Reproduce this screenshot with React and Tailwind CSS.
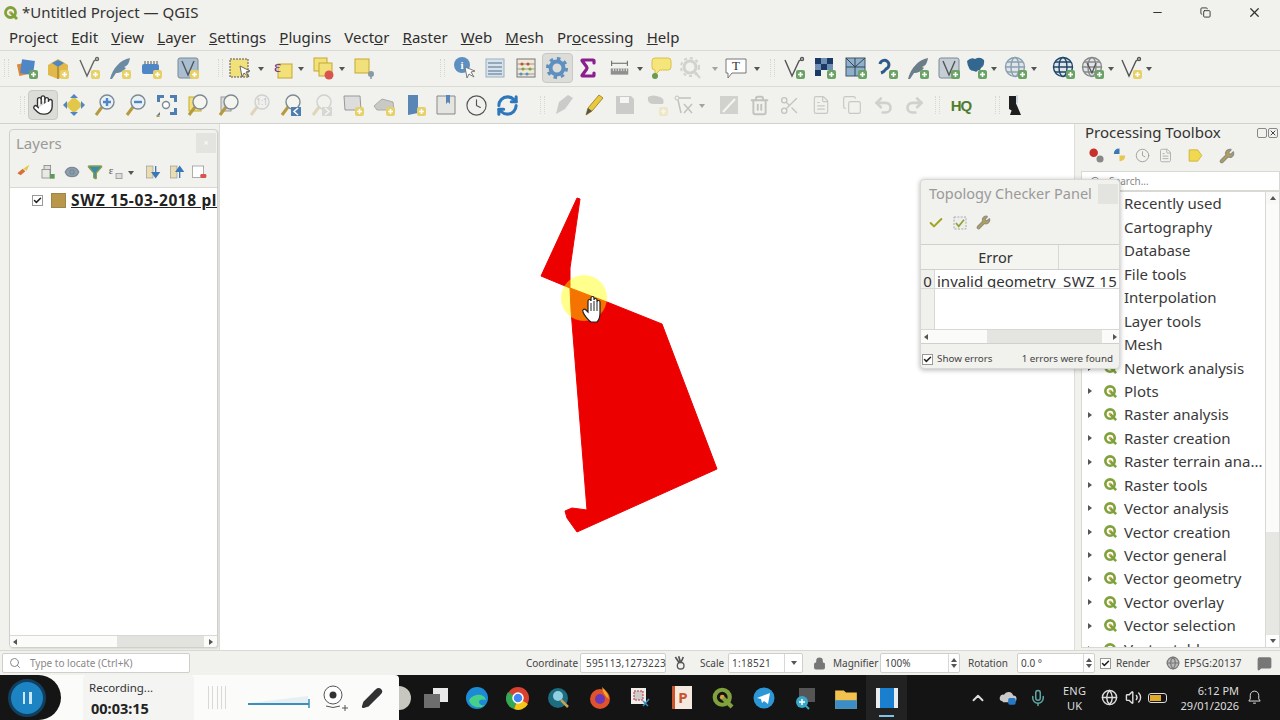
import {
  Hand, Sigma, Search, Clock, Wrench, Scissors, Undo2, Redo2, ChevronUp, Mic, Volume2, Globe, Lock, Eye, Funnel, Check, FileText,
  RefreshCw, Pencil, Minus, X, Copy, Trash2, MessageSquare,
} from "lucide-react";

const sans = "font-['Noto_Sans',sans-serif]";

function S({ children, size = 24, className = "" }) {
  return (
    <svg width={size} height={size} viewBox="0 0 24 24" className={`shrink-0 ${className}`}>
      {children}
    </svg>
  );
}

// small plus badge in the corner of the "add layer" icons
function Add({ green }) {
  return (
    <g>
      <rect x="14" y="14" width="9" height="9" rx="2" fill={green ? "#6ba366" : "#e8d068"} />
      <path d="M18.5 16v5M16 18.5h5" stroke="#fff" strokeWidth="1.6" />
    </g>
  );
}

function Mag({ fill = "#fff", x = 14, y = 9, r = 7 }) {
  return (
    <g>
      <path d={`M${x - 5} ${y + 5}L3 22`} stroke="#b59a3e" strokeWidth="3" />
      <circle cx={x} cy={y} r={r} fill={fill} stroke="#7d8a94" strokeWidth="1.4" />
    </g>
  );
}

function Vert({ c = "#666" }) {
  return (
    <g fill="none" stroke={c} strokeWidth="1.4">
      <path d="M3 4l7 16 7-15 3-2" />
      <circle cx="20" cy="3" r="1.5" fill="#fff" />
    </g>
  );
}

function Feather({ c = "#6b8aa3" }) {
  return <path d="M2 23C5 12 12 4 22 2c-1 6-3 8-6 9l2 1c-3 4-7 5-10 5l-4 6z" fill={c} />;
}

function Glob({ c = "#8aa0b0" }) {
  return (
    <g fill="none" stroke={c} strokeWidth="1.4">
      <circle cx="11" cy="11" r="9.5" fill="#dfe5e8" />
      <ellipse cx="11" cy="11" rx="4" ry="9.5" />
      <path d="M1.5 11h19M3 6h16M3 16h16" />
    </g>
  );
}

function Grip({ className = "" }) {
  return <div className={`w-[5px] h-[18px] shrink-0 border-x border-dotted border-[#d6d6d2] ${className}`} />;
}

function Drop() {
  return <div className="w-0 h-0 shrink-0 border-x-[3.5px] border-x-transparent border-t-[4px] border-t-[#555] ml-[3px] mt-[2px]" />;
}

function Btn({ children, active, className = "w-[31px]" }) {
  return (
    <div className={`h-[30px] flex items-center justify-center shrink-0 rounded-sm ${active ? "bg-[#dcdcd8] border border-[#c8c8c4]" : ""} ${className}`}>
      {children}
    </div>
  );
}

function QLogo({ size = 16 }) {
  return (
    <svg width={size} height={size} viewBox="0 0 16 16" className="shrink-0">
      <circle cx="7.5" cy="7.5" r="5" fill="none" stroke="#7fa23c" strokeWidth="2.8" />
      <circle cx="7.5" cy="7.5" r="1.6" fill="#d9a441" />
      <path d="M8 8l6 6" stroke="#7fa23c" strokeWidth="2.8" />
    </svg>
  );
}

function Arrow({ dir = "right", className = "" }) {
  if (dir === "right") return <div className={`w-0 h-0 shrink-0 border-y-[3.5px] border-y-transparent border-l-[4px] border-l-[#555] ${className}`} />;
  if (dir === "left") return <div className={`w-0 h-0 shrink-0 border-y-[3.5px] border-y-transparent border-r-[4px] border-r-[#555] ${className}`} />;
  if (dir === "up") return <div className={`w-0 h-0 shrink-0 border-x-[3.5px] border-x-transparent border-b-[4px] border-b-[#555] ${className}`} />;
  return <div className={`w-0 h-0 shrink-0 border-x-[3.5px] border-x-transparent border-t-[4px] border-t-[#555] ${className}`} />;
}

function Menu() {
  return (
    <div className={`flex items-center h-[25px] pl-[9px] gap-[13.2px] text-[15px] text-[#2e2e2e] ${sans}`}>
      <span>Project</span>
      <span><u>E</u>dit</span>
      <span><u>V</u>iew</span>
      <span><u>L</u>ayer</span>
      <span><u>S</u>ettings</span>
      <span><u>P</u>lugins</span>
      <span>Vect<u>o</u>r</span>
      <span><u>R</u>aster</span>
      <span><u>W</u>eb</span>
      <span><u>M</u>esh</span>
      <span>Pr<u>o</u>cessing</span>
      <span><u>H</u>elp</span>
    </div>
  );
}

function ToolbarOne() {
  return (
    <div className="flex items-center h-[36px] pl-[4px] pb-px border-t border-[#dadad6]">
      <Grip className="mr-[2px]" />
      <Btn><S><rect x="3" y="7" width="12" height="12" fill="#d98a3a" transform="rotate(-12 9 13)" /><rect x="6" y="4" width="13" height="14" fill="#4f86c6" transform="rotate(8 12 11)" /><Add green /></S></Btn>
      <Btn><S><path d="M2 9l10-6 10 6v10l-10 4-10-4z" fill="#e2b84a" /><path d="M6 7l6-3 6 3-6 4z" fill="#4f86c6" /><path d="M12 11v12" stroke="#8a6d2a" /><Add /></S></Btn>
      <Btn><S><Vert /><Add /></S></Btn>
      <Btn><S><Feather /><Add /></S></Btn>
      <Btn><S><rect x="3" y="8" width="17" height="10" rx="2" fill="#4f86c6" /><path d="M6 5v3M9 5v3M12 5v3M15 5v3M18 5v3" stroke="#555" /><Add /></S></Btn>
      <div className="w-[6px] shrink-0" />
      <Btn><S><rect x="2" y="2" width="20" height="20" rx="2" fill="#a9bed0" stroke="#7d8a94" /><path d="M6 5l6 14 6-14" fill="none" stroke="#555" strokeWidth="1.4" /><Add /></S></Btn>
      <div className="w-[15px] shrink-0" />
      <Grip />
      <div className="w-[4.5px] shrink-0" />
      <Btn className="w-[24px]"><S><rect x="2" y="3" width="18" height="18" fill="#f2e07a" stroke="#555" strokeDasharray="2 1" /><path d="M12 10l2 11 2-4 5 4-3-5 4-1z" fill="#fff" stroke="#666" /></S></Btn>
      <div className="w-[3px] shrink-0" />
      <Drop />
      <div className="w-[7.5px] shrink-0" />
      <Btn className="w-[24px]"><S><rect x="7" y="8" width="14" height="14" fill="#f2e07a" stroke="#c4a92f" /><text x="3" y="16" fontSize="17" fill="#6a2a8a" fontFamily="Liberation Serif, serif">ε</text></S></Btn>
      <Drop />
      <div className="w-[8px] shrink-0" />
      <Btn className="w-[24px]"><S><rect x="2" y="2" width="13" height="13" fill="#f2e07a" stroke="#c4a92f" /><rect x="7" y="7" width="13" height="13" fill="#f2e07a" stroke="#c4a92f" /><circle cx="17" cy="19" r="4.5" fill="#d9534f" /></S></Btn>
      <Drop />
      <div className="w-[3.5px] shrink-0" />
      <Btn className="w-[31px]"><S><rect x="3" y="3" width="14" height="14" fill="#f2e07a" stroke="#c4a92f" /><circle cx="19" cy="18" r="3" fill="#8a9aa5" /><path d="M19 20v3" stroke="#8a9aa5" strokeWidth="1.5" /></S></Btn>
      <div className="w-[69px] shrink-0 flex justify-end"><Grip className="mr-[4px]" /></div>
      <Btn><S><circle cx="10" cy="9" r="8" fill="#5d8fc0" /><text x="10" y="13" textAnchor="middle" fontSize="11" fontWeight="700" fill="#fff" fontFamily="Liberation Serif, serif">i</text><path d="M13 11l2 11 2-4 5 3-3-5 4-1z" fill="#fff" stroke="#777" /></S></Btn>
      <Btn><S><rect x="3" y="3" width="18" height="18" fill="#d6e2ec" stroke="#9fb0bd" /><path d="M5 7h14M5 11h14M5 15h14M5 18h14" stroke="#7d97ab" strokeWidth="1.4" /></S></Btn>
      <Btn><S><rect x="3" y="3" width="18" height="18" fill="#efe9d8" stroke="#777" /><path d="M3 8h18M3 13h18M3 18h18" stroke="#999" /><circle cx="8" cy="8" r="1.6" fill="#c0513c" /><circle cx="14" cy="8" r="1.6" fill="#c0513c" /><circle cx="9" cy="13" r="1.6" fill="#7fa23c" /><circle cx="16" cy="13" r="1.6" fill="#7fa23c" /><circle cx="7" cy="18" r="1.6" fill="#5d8fc0" /><circle cx="13" cy="18" r="1.6" fill="#5d8fc0" /></S></Btn>
      <Btn active><S><circle cx="12" cy="12" r="6.5" fill="none" stroke="#5d8fc0" strokeWidth="4" /><circle cx="12" cy="12" r="9.5" fill="none" stroke="#5d8fc0" strokeWidth="3" strokeDasharray="3.5 3.9" /></S></Btn>
      <Btn><Sigma size={24} strokeWidth={3.2} color="#8a1f8f" /></Btn>
      <Btn className="w-[22px] ml-[5px]"><S size={21}><path d="M3 6h18M3 3v6M21 3v6" stroke="#666" strokeWidth="1.2" /><rect x="2" y="12" width="20" height="7" fill="#8f8f8f" /><path d="M5 12v3M8 12v3M11 12v3M14 12v3M17 12v3M20 12v3" stroke="#eee" /></S></Btn>
      <div className="w-[3px] shrink-0" />
      <Drop />
      <div className="w-[3px] shrink-0" />
      <Btn><S><path d="M3 5q0-3 3-3h13q3 0 3 3v6q0 3-3 3H11l-5 5v-5q-3 0-3-3z" fill="#f6e57a" stroke="#d8c24c" /><circle cx="6" cy="20" r="3" fill="#6b9a50" /></S></Btn>
      <Btn className="w-[22px] ml-[3px]"><S className="opacity-30"><circle cx="11" cy="11" r="6" fill="none" stroke="#888" strokeWidth="3" /><circle cx="11" cy="11" r="9" fill="none" stroke="#888" strokeWidth="2" strokeDasharray="3 3" /><path d="M15 15l6 7" stroke="#888" strokeWidth="2" /></S></Btn>
      <Arrow dir="down" className="ml-[10px] mt-[2px] opacity-50" />
      <div className="w-[6.5px] shrink-0" />
      <Btn className="w-[24px]"><S><path d="M2 3h20v14H8l-4 5v-5H2z" fill="#fff" stroke="#777" /><text x="12" y="14" textAnchor="middle" fontSize="13" fill="#333" fontFamily="Liberation Serif, serif">T</text></S></Btn>
      <div className="w-[2.5px] shrink-0" />
      <Drop />
      <div className="w-[18.5px] shrink-0 flex justify-end"><Grip className="mr-[3px]" /></div>
      <Btn><S><Vert c="#555" /><Add green /></S></Btn>
      <Btn><S><rect x="2" y="2" width="6" height="6" fill="#1c3a66" /><rect x="14" y="2" width="6" height="6" fill="#1c3a66" /><rect x="8" y="8" width="6" height="6" fill="#1c3a66" /><rect x="2" y="14" width="6" height="6" fill="#1c3a66" /><rect x="8" y="2" width="6" height="6" fill="#6f8fb5" /><rect x="14" y="8" width="6" height="6" fill="#6f8fb5" /><rect x="2" y="8" width="6" height="6" fill="#6f8fb5" /><Add green /></S></Btn>
      <Btn><S><rect x="2" y="2" width="19" height="18" fill="#8eb0cb" stroke="#456" /><path d="M2 11h19M11 2v18M2 2l9 9M21 2l-10 9" stroke="#345" /><Add green /></S></Btn>
      <Btn><S><path d="M5 8a4.500 4.500 0 1 1 6 5q-2 3-5 4" fill="none" stroke="#2d5a88" strokeWidth="3" /><Add green /></S></Btn>
      <Btn><S><Feather c="#6c7d8a" /><Add green /></S></Btn>
      <Btn><S><rect x="2" y="2" width="20" height="20" rx="2" fill="#c5ced4" stroke="#7d8a94" /><path d="M6 5l6 14 6-14" fill="none" stroke="#555" strokeWidth="1.4" /><Add green /></S></Btn>
      <Btn className="w-[24px]"><S><path d="M3 5q4-4 8-2 5-3 9 1 1 5-3 8-1 3-3 2-1 3-4 1-6 0-7-10z" fill="#34678f" /><Add green /></S></Btn>
      <Drop />
      <div className="w-[7px] shrink-0" />
      <Btn className="w-[24px]"><S><Glob /><Add green /></S></Btn>
      <Drop />
      <div className="w-[11px] shrink-0" />
      <Btn className="w-[31px]"><S><Glob c="#1e4668" /><Add green /></S></Btn>
      <Btn className="w-[24px] ml-[2px]"><S><Glob c="#888" /><path d="M6 7l5 10 4-10" fill="none" stroke="#555" strokeWidth="1.3" /><Add green /></S></Btn>
      <Drop />
      <div className="w-[5px] shrink-0" />
      <Btn className="w-[24px]"><S><Vert c="#555" /><Add /></S></Btn>
      <Drop />
    </div>
  );
}

const off = "opacity-30";

function ToolbarTwo() {
  return (
    <div className="flex items-center h-[37px] pl-[20px] border-t border-[#dadad6]">
      <Grip className="mr-[3px]" />
      <Btn active className="w-[30px]"><Hand size={22} strokeWidth={1.5} color="#333" fill="#fff" /></Btn>
      <Btn><S><rect x="6" y="6" width="12" height="12" fill="#e2c84a" transform="rotate(45 12 12)" /><path d="M12 1l4 4H8zM12 23l4-4H8zM1 12l4-4v8zM23 12l-4-4v8z" fill="#4f86c6" /></S></Btn>
      <Btn><S><Mag fill="#e9f0f6" /><path d="M10 9h8M14 5v8" stroke="#4f86c6" strokeWidth="2.4" /></S></Btn>
      <Btn><S><Mag fill="#e9f0f6" /><path d="M10 9h8" stroke="#4f86c6" strokeWidth="2.4" /></S></Btn>
      <Btn><S><path d="M2 2h7v3H5v4H2zM22 2h-7v3h4v4h3zM2 22h3v-3zM22 22h-7v-3h4v-4h3z" fill="#4f7fb0" /><Mag fill="#fff" x="11" y="12" r="3.500" /></S></Btn>
      <Btn><S><rect x="3" y="4" width="12" height="14" fill="#f2e07a" stroke="#c4a92f" /><Mag fill="#f5f5f0" /></S></Btn>
      <Btn><S><rect x="4" y="4" width="10" height="14" fill="#ddd" stroke="#999" /><Mag fill="#f5f5f0" /></S></Btn>
      <Btn><S className={off}><Mag fill="#eee" /><text x="14" y="12" textAnchor="middle" fontSize="8" fill="#555">1:1</text></S></Btn>
      <Btn><S><Mag fill="#f5f5f0" /><rect x="12" y="14" width="10" height="9" fill="#4f7fb0" /><path d="M19 15l-4 3.500 4 3.500" fill="none" stroke="#fff" strokeWidth="1.5" /></S></Btn>
      <Btn><S className={off}><Mag fill="#f5f5f0" /><rect x="12" y="14" width="10" height="9" fill="#999" /><path d="M15 15l4 3.500-4 3.500" fill="none" stroke="#fff" strokeWidth="1.5" /></S></Btn>
      <Btn><S><path d="M3 3h16l1 14H4z" fill="#ddd" stroke="#999" /><Add /></S></Btn>
      <Btn><S><path d="M2 13l8-7 11 3 1 8H5z" fill="#c9c9c5" stroke="#aaa" /><Add /></S></Btn>
      <Btn><S><path d="M5 2h10v18l-10 2z" fill="#5a86b5" /><Add /></S></Btn>
      <Btn><S><path d="M3 3h18v18H3z" fill="#e4e4e0" stroke="#888" /><path d="M12 2h4v9l-2-2-2 2z" fill="#5a86b5" /></S></Btn>
      <Btn><Clock size={23} strokeWidth={1.2} color="#555" /></Btn>
      <Btn><RefreshCw size={23} strokeWidth={3.2} color="#2f77bb" /></Btn>
      <div className="w-[26px] shrink-0 flex justify-end"><Grip className="mr-[4px]" /></div>
      <Btn><S className={off}><path d="M3 21L6 9l9-7 5 3-8 11z" fill="#777" /></S></Btn>
      <Btn className="w-[28px]"><S><path d="M4 22l2-7L17 2l4 3L10 18z" fill="#e9c93f" stroke="#a88d2a" /><path d="M4 22l2-7 4 3z" fill="#555" /></S></Btn>
      <Btn className="w-[33px]"><S className={off}><path d="M3 3h15l3 3v15H3z" fill="#777" /><rect x="7" y="4" width="9" height="6" fill="#fff" /></S></Btn>
      <Btn><S className={off}><path d="M3 4q5-3 12 0 5 2 3 7H8q-6 0-5-7z" fill="#777" /><Add /></S></Btn>
      <Btn className="w-[24px]"><S className={off}><circle cx="5" cy="5" r="2" fill="none" stroke="#555" /><path d="M6 7l3 13M7 5h12M12 11l8 9M20 11l-8 9" stroke="#555" strokeWidth="1.5" /></S></Btn>
      <Arrow dir="down" className="ml-[3px] mt-[2px] opacity-50" />
      <div className="w-[7px] shrink-0" />
      <Btn className="w-[33px]"><S className={off}><rect x="3" y="3" width="18" height="18" fill="#888" /><path d="M6 19L18 6" stroke="#fff" strokeWidth="2" /></S></Btn>
      <Btn className="w-[29px]"><Trash2 size={21} strokeWidth={2.2} color="#c2c2be" /></Btn>
      <Btn><Scissors size={21} strokeWidth={1.5} color="#c2c2be" /></Btn>
      <Btn><FileText size={20} strokeWidth={1.4} color="#c8c8c4" /></Btn>
      <Btn className="w-[31px]"><Copy size={20} strokeWidth={1.4} color="#c8c8c4" /></Btn>
      <Btn className="w-[32px]"><Undo2 size={21} strokeWidth={3} color="#d0d0cc" /></Btn>
      <Btn className="w-[30px]"><Redo2 size={21} strokeWidth={3} color="#d0d0cc" /></Btn>
      <div className="w-[16px] shrink-0 flex justify-center"><Grip /></div>
      <div className="w-[32px] shrink-0 flex items-center justify-center text-[15px] font-bold text-[#4e7d2f] font-['Liberation_Sans',sans-serif] leading-none tracking-[-1px]">HQ</div>
      <div className="w-[23px] shrink-0 flex justify-end"><Grip /></div>
      <Btn className="w-[28px]"><S><path d="M7 3h7v17l-7-4z" fill="#1e1e1e" /><path d="M13 8l6 14H8z" fill="#1e1e1e" /><path d="M15 2v8" stroke="#9cc4e4" /></S></Btn>
    </div>
  );
}

function HScroll({ thumbClass, className = "" }) {
  return (
    <div className={`flex items-center bg-[#fbfbfa] border-t border-[#d8d8d4] ${className}`}>
      <div className="w-[9px] flex justify-center"><Arrow dir="left" /></div>
      <div className={thumbClass} />
      <div className="flex-1" />
      <div className="w-[9px] flex justify-center"><Arrow dir="right" /></div>
    </div>
  );
}

function LayersPanel() {
  return (
    <div className="w-[209px] ml-[9px] mt-[5px] mb-[2px] mr-px flex flex-col border border-[#cfcfcb] rounded-sm shadow-[1px_1px_2px_rgba(0,0,0,0.1)] bg-[#f1f1ed] overflow-hidden">
      <div className="h-[26px] pl-[6px] pr-px flex items-center justify-between shrink-0">
        <span className={`text-[15px] text-[#9a9a9a] ${sans}`}>Layers</span>
        <div className="w-[20px] h-[20px] bg-[#e3e3df] flex items-center justify-center text-[9px] text-[#fff]">×</div>
      </div>
      <div className="h-[31px] pl-[2px] flex items-center shrink-0">
        <Btn className="w-[24px]"><S size={16}><path d="M2 14l8-7 4 4-7 6z" fill="#d9703a" /><path d="M11 7l9-6-4 9z" fill="#e2c84a" /></S></Btn>
        <Btn className="w-[24px]"><S size={16}><rect x="6" y="2" width="10" height="14" fill="#ddd" stroke="#777" /><rect x="3" y="8" width="12" height="13" fill="#e9e9e5" stroke="#777" /><rect x="15" y="15" width="7" height="7" fill="#5f9a5a" /></S></Btn>
        <Btn className="w-[24px]"><Eye size={16} fill="#8aa0b0" color="#7d8a94" /></Btn>
        <Btn className="w-[22px]"><Funnel size={16} fill="#3d8aa8" color="#8aa04a" /></Btn>
        <Btn className="w-[19px]"><S size={16}><text x="1" y="15" fontSize="17" fill="#555" fontFamily="Liberation Serif, serif">ε</text><rect x="12" y="14" width="9" height="8" fill="#ddd" stroke="#888" /></S></Btn>
        <Drop />
        <div className="w-[7px] shrink-0" />
        <Btn className="w-[24px]"><S size={16}><rect x="2" y="3" width="10" height="18" fill="#e9dcb0" stroke="#999" /><path d="M16 3v12M11 13l5 7 5-7z" fill="#3b78b5" stroke="#3b78b5" strokeWidth="2" /></S></Btn>
        <Btn className="w-[23px]"><S size={16}><rect x="2" y="3" width="10" height="18" fill="#e9dcb0" stroke="#999" /><path d="M16 21V9M11 11l5-7 5 7z" fill="#3b78b5" stroke="#3b78b5" strokeWidth="2" /></S></Btn>
        <Btn className="w-[22px]"><S size={16}><rect x="2" y="3" width="17" height="17" fill="#fff" stroke="#888" /><rect x="14" y="15" width="9" height="6" rx="2" fill="#d9534f" /></S></Btn>
      </div>
      <div className="flex-1 bg-white border-t border-[#d8d8d4] overflow-hidden">
        <div className="h-[25px] flex items-center whitespace-nowrap">
          <div className="ml-[22px] w-[11px] h-[11px] border border-[#999] bg-white flex items-center justify-center shrink-0">
            <Check size={9} strokeWidth={4} color="#222" />
          </div>
          <div className="ml-[8px] w-[15px] h-[15px] bg-[#b8974a] border border-[#9c8650] shrink-0" />
          <span className={`ml-[5px] text-[15.5px] font-bold underline tracking-[0.6px] text-[#222] ${sans}`}>SWZ 15-03-2018 pl</span>
        </div>
      </div>
      <HScroll className="h-[12px] pr-[2px] shrink-0" thumbClass="w-[87px] ml-[98px] h-full bg-[#e2e2de]" />
    </div>
  );
}

const toolboxItems = [
  "Recently used", "Cartography", "Database", "File tools", "Interpolation", "Layer tools", "Mesh", "Network analysis", "Plots",
  "Raster analysis", "Raster creation", "Raster terrain ana...", "Raster tools", "Vector analysis", "Vector creation",
  "Vector general", "Vector geometry", "Vector overlay", "Vector selection", "Vector table",
];

function Toolbox() {
  return (
    <div className={`w-[200px] ml-[5px] mb-[2px] flex flex-col ${sans}`}>
      <div className="h-[17px] pl-[5px] pr-[2px] flex items-center justify-between shrink-0">
        <span className="text-[15px] text-[#333]">Processing Toolbox</span>
        <div className="flex gap-[1px]">
          <div className="w-[10px] h-[10px] border border-[#888] rounded-[2px]" />
          <div className="w-[10px] h-[10px] border border-[#888] rounded-[2px] flex items-center justify-center"><X size={8} color="#444" strokeWidth={3} /></div>
        </div>
      </div>
      <div className="h-[29px] mb-px pl-[5px] flex items-center shrink-0">
        <Btn className="w-[23px]"><S size={17}><circle cx="8" cy="8" r="6" fill="#c9302c" /><circle cx="17" cy="17" r="5" fill="#888" /></S></Btn>
        <Btn className="w-[23px]"><S size={17}><path d="M4 10q0-8 8-8v8z" fill="#3b78b5" /><path d="M20 12q0 8-8 8v-8z" fill="#e6c84f" /></S></Btn>
        <Btn className="w-[23px]"><Clock size={15} strokeWidth={1.4} color="#999" /></Btn>
        <Btn className="w-[23px]"><FileText size={15} strokeWidth={1.4} color="#aaa" /></Btn>
        <div className="w-[6px]" />
        <Btn className="w-[24px]"><S size={17}><path d="M3 4h12l6 8-6 8H3z" fill="#f0d84f" stroke="#c4a92f" /></S></Btn>
        <div className="w-[8px]" />
        <Btn className="w-[24px]"><Wrench size={16} fill="#b9a04a" color="#8f8f8a" /></Btn>
      </div>
      <div className="h-[20px] ml-px bg-white border border-[#d8d8d4] flex items-center pl-[8px] text-[10px] text-[#888] shrink-0">
        <Search size={11} color="#777" />
        <span className="ml-[8px]">Search...</span>
      </div>
      <div className="flex-1 flex ml-px border border-[#d8d8d4] bg-white min-h-0">
        <div className="flex-1 overflow-hidden">
          {toolboxItems.map((item, i) => (
            <div key={item} className="h-[23.45px] flex items-center text-[15px] text-[#3a3a3a] whitespace-nowrap">
              <Arrow className={i < 7 ? "ml-[6px] opacity-0" : "ml-[6px]"} />
              <div className="ml-[10px] w-[16px] shrink-0 flex justify-center">{i >= 7 && <QLogo size={15} />}</div>
              <span className="ml-[6px]">{item}</span>
            </div>
          ))}
        </div>
        <div className="w-[14px] flex flex-col border-l border-[#d8d8d4] bg-[#f8f8f7]">
          <div className="h-[12px] flex justify-center items-center"><Arrow dir="up" /></div>
          <div className="h-[328px] bg-[#fbfbfa]" />
          <div className="flex-1 bg-[#e6e6e2]" />
          <div className="h-[12px] flex justify-center items-center bg-white"><Arrow dir="down" /></div>
        </div>
      </div>
    </div>
  );
}

function TopologyPanel() {
  return (
    <div className={`absolute left-[920px] top-[55px] w-[200px] h-[190px] flex flex-col bg-[#f1f1ed] rounded-sm border border-[#d8d8d4] shadow-[0_1px_5px_rgba(0,0,0,0.3)] overflow-hidden ${sans}`}>
      <div className="h-[27px] pl-[8px] pr-px flex items-center justify-between shrink-0">
        <span className="text-[14.5px] text-[#9a9a9a] whitespace-nowrap">Topology Checker Panel</span>
        <div className="w-[20px] h-[20px] bg-[#e3e3df] shrink-0" />
      </div>
      <div className="h-[37px] pl-[3px] pb-[6px] flex items-center shrink-0">
        <Btn className="w-[24px]"><Check size={16} strokeWidth={3} color="#a3a321" /></Btn>
        <Btn className="w-[24px]"><S size={16}><rect x="3" y="3" width="18" height="18" fill="#eee" stroke="#888" strokeDasharray="3 2" /><path d="M6 12l4 5 8-10" fill="none" stroke="#8fa32e" strokeWidth="2.5" /></S></Btn>
        <Btn className="w-[22px]"><Wrench size={15} fill="#b9a04a" color="#8f8f8a" /></Btn>
      </div>
      <div className="h-[100px] bg-white flex flex-col border-y border-[#d0d0cc] shrink-0">
        <div className="h-[25px] flex bg-[#f4f4f1] border-b border-[#d0d0cc] text-[14.5px] text-[#333] shrink-0">
          <div className="w-[138px] border-r border-[#d8d8d4] text-center leading-[24px] pl-[12px]">Error</div>
          <div className="flex-1" />
        </div>
        <div className="h-[19px] flex text-[15px] text-[#333] border-b border-[#d8d8d4] shrink-0 overflow-hidden whitespace-nowrap">
          <div className="w-[14px] bg-[#f0f0ec] border-r border-[#d8d8d4] text-center leading-[22px]">0</div>
          <div className="w-[125px] pl-[2px] leading-[22px]">invalid geometry</div>
          <div className="flex-1 pl-[3px] leading-[22px] tracking-[0.4px]">SWZ 15</div>
        </div>
        <div className="flex-1 flex">
          <div className="w-[14px] bg-[#f0f0ec] border-r border-[#d8d8d4]" />
        </div>
        <HScroll className="h-[14px] shrink-0" thumbClass="w-[115px] ml-[57px] h-full bg-[#e4e4e0]" />
      </div>
      <div className="flex-1 pl-px pr-[6px] pt-[7px] flex items-center justify-between text-[9.8px] text-[#444]">
        <div className="flex items-center gap-[4px]">
          <div className="w-[11px] h-[11px] border border-[#999] bg-white flex items-center justify-center">
            <Check size={9} strokeWidth={4} color="#222" />
          </div>
          Show errors
        </div>
        <span>1 errors were found</span>
      </div>
    </div>
  );
}

function MapCanvas() {
  return (
    <div className="relative flex-1 bg-white border-l border-r border-[#dcdcd8] overflow-hidden">
      <svg width="856" height="526" viewBox="220 124 856 526" className="block">
        <path
          d="M577 198L580 199L570 268L570 288L607 302L662 324L717 469L577 532L567 518L565 511L572 508L587 510L571 310L570 288L541 276Z"
          fill="#ed0000"
          stroke="#ed0000"
          strokeLinejoin="round"
        />
        <circle cx="584" cy="298" r="23" fill="#ffff00" opacity="0.45" />
        <path
          d="M591 322c-3-2-7-7-8-10-1-2 1-4 3-2l2 2v-11c0-2 3-2 3 0v-3c0-2 3-2 3 0v2c0-2 3-2 3 0v2c0-2 3-2 3 0v11c0 4-1 7-3 9z"
          fill="#fff"
          stroke="#222"
          strokeWidth="1.2"
        />
        <path d="M591 303v8M594 301v10M597 302v9" stroke="#222" strokeWidth="1" />
      </svg>
    </div>
  );
}

function Field({ children, className = "" }) {
  return <div className={`h-[20px] shrink-0 bg-white border border-[#cfcfcb] rounded-[2px] flex items-center text-[#444] ${className}`}>{children}</div>;
}

function Spin() {
  return (
    <div className="ml-auto w-[11px] h-full border-l border-[#d8d8d4] flex flex-col items-center justify-center gap-[2px]">
      <Arrow dir="up" />
      <Arrow dir="down" />
    </div>
  );
}

function StatusBar() {
  return (
    <div className={`h-[25px] shrink-0 flex items-center pl-[2px] border-t border-[#d8d8d4] text-[10px] text-[#444] bg-[#f1f1ed] whitespace-nowrap ${sans}`}>
      <Field className="w-[188px] pl-[6px]">
        <Search size={12} color="#888" />
        <span className="ml-[9px] text-[#888]">Type to locate (Ctrl+K)</span>
      </Field>
      <span className="ml-[336px] w-[49px] shrink-0">Coordinate</span>
      <Field className="ml-[5px] w-[86px] pl-[5px] tracking-[0.2px]">595113,1273223</Field>
      <S size={16} className="ml-[6px]"><path d="M5 3l6 9M10 2l3 10M17 3l-4 9" stroke="#555" strokeWidth="2.500" /><circle cx="13" cy="16" r="5" fill="none" stroke="#555" strokeWidth="2" /></S>
      <span className="ml-[12px] w-[24px] shrink-0">Scale</span>
      <Field className="ml-[4px] w-[75px] pl-[3px] tracking-[0.3px]">
        1:18521
        <div className="ml-auto w-[18px] h-full border-l border-[#d8d8d4] flex items-center justify-center"><Arrow dir="down" /></div>
      </Field>
      <Lock size={13} className="ml-[10px] shrink-0" fill="#777" color="#777" />
      <span className="ml-[7px] w-[42px] shrink-0">Magnifier</span>
      <Field className="ml-[5px] w-[80px] pl-[4px]">100%<Spin /></Field>
      <span className="ml-[8px] w-[39px] shrink-0">Rotation</span>
      <Field className="ml-[10px] w-[78px] pl-[3px]">0.0 °<Spin /></Field>
      <div className="ml-[5px] w-[11px] h-[11px] shrink-0 border border-[#999] bg-white flex items-center justify-center">
        <Check size={9} strokeWidth={4} color="#222" />
      </div>
      <span className="ml-[5px] w-[33px] shrink-0">Render</span>
      <Globe size={14} className="ml-[17px] shrink-0" fill="#bbb" color="#777" />
      <span className="ml-[4px] w-[56px] shrink-0 tracking-[0.2px]">EPSG:20137</span>
      <MessageSquare size={15} className="ml-[17px] shrink-0" fill="#777" color="#777" />
    </div>
  );
}

function RecorderPanel() {
  return (
    <div className={`relative w-[399px] h-full bg-[#fbfbfa] rounded-tr-sm flex items-center shrink-0 ${sans}`}>
      <div className="w-[61px] h-full bg-[#151515] rounded-r-[24px] flex items-center pl-[8px]">
        <div className="w-[38px] h-[38px] rounded-full bg-[#1d84c4] border-[3px] border-[#123f5e] flex items-center justify-center gap-[4px]">
          <div className="w-[2.5px] h-[12px] bg-[#cfe8f7]" />
          <div className="w-[2.5px] h-[12px] bg-[#cfe8f7]" />
        </div>
      </div>
      <div className="ml-[22px] w-[111px] h-full bg-[#f4f4f3] rounded-t pl-[6px] pt-[4px] flex flex-col">
        <span className="text-[11.5px] text-[#333] leading-[17px]">Recording...</span>
        <span className="text-[14.5px] font-bold text-[#222] leading-[25px] pl-[2px]">00:03:15</span>
      </div>
      <div className="ml-[14px] w-[18px] h-[23px] flex justify-between">
        <div className="w-px h-full bg-[#d8d8d8]" />
        <div className="w-px h-full bg-[#d8d8d8]" />
        <div className="w-px h-full bg-[#d8d8d8]" />
        <div className="w-px h-full bg-[#d8d8d8]" />
        <div className="w-px h-full bg-[#d8d8d8]" />
      </div>
      <svg width="62" height="14" viewBox="0 0 62 14" className="ml-[22px] mt-[6px]">
        <path d="M2 9L60 2V9z" fill="#e6eff4" />
        <path d="M0 10h61" stroke="#3a8fbe" strokeWidth="2" />
        <path d="M61 5v9" stroke="#3a8fbe" strokeWidth="1.5" />
      </svg>
      <svg width="26" height="26" viewBox="0 0 26 26" className="ml-[12px]">
        <circle cx="11" cy="10" r="9" fill="#fff" stroke="#555" />
        <circle cx="11" cy="10" r="3.500" fill="#333" />
        <path d="M4 21q7 3 14 0M20 23h6M23 20v6" fill="none" stroke="#555" />
      </svg>
      <Pencil size={22} fill="#333" color="#333" className="ml-[13px]" />
    </div>
  );
}

function TaskIcon({ children, active }) {
  return (
    <div className={`w-[41px] h-full flex items-center justify-center shrink-0 relative ${active ? "bg-[#222]" : ""}`}>
      {children}
      {active && <div className="absolute bottom-[3px] w-[15px] h-[2px] bg-[#7cc4ea]" />}
    </div>
  );
}

function Taskbar() {
  return (
    <div className={`h-[45px] shrink-0 flex items-center bg-[#141414] text-white ${sans}`}>
      <RecorderPanel />
      <div className="w-[12px] h-[24px] bg-[#c7c7c0] rounded-r-full shrink-0" />
      <div className="flex items-center h-full ml-[4px]">
        <TaskIcon>
          <div className="relative w-[24px] h-[20px]">
            <div className="absolute right-0 top-0 w-[15px] h-[14px] bg-[#e9e9e9]" />
            <div className="absolute left-0 bottom-0 w-[16px] h-[14px] bg-[#6e6e6e]" />
          </div>
        </TaskIcon>
        <TaskIcon><S size={24}><circle cx="12" cy="12" r="11" fill="#1d8ad6" /><path d="M4 15c2-7 15-9 17-1-3-1-7-1-7 2 0 3 4 4 6 3-4 4-13 3-16-4z" fill="#46d18a" /></S></TaskIcon>
        <TaskIcon><S size={24}><circle cx="12" cy="12" r="11" fill="#d8412f" /><path d="M12 12L22 18A11 11 0 0 1 8 23z" fill="#f5c518" /><path d="M12 12L8 23A11 11 0 0 1 2 6z" fill="#34a853" /><circle cx="12" cy="12" r="5" fill="#4285f4" stroke="#fff" strokeWidth="1.5" /></S></TaskIcon>
        <TaskIcon><S size={24}><circle cx="11" cy="12" r="10" fill="#1d6c80" /><circle cx="11" cy="10" r="5" fill="#8fd0e0" /><path d="M14 14l7 7" stroke="#c2a35a" strokeWidth="2.5" /></S></TaskIcon>
        <TaskIcon><S size={24}><circle cx="12" cy="13" r="10" fill="#e0522c" /><path d="M14 1q6 5 7 12-6-4-7-12z" fill="#f6a623" /><circle cx="12" cy="13" r="5" fill="#6a38b8" /></S></TaskIcon>
        <TaskIcon><S size={24}><rect x="2" y="2" width="15" height="16" fill="#eee" /><rect x="5" y="5" width="9" height="9" fill="#ccc" stroke="#c9302c" strokeDasharray="2 1" /><path d="M14 15l5 5M20 13l-6 7" stroke="#3b90c0" strokeWidth="1.5" /></S></TaskIcon>
        <TaskIcon><div className="w-[20px] h-[23px] bg-[#f5e8de] border-l-[3px] border-[#c8552d] flex items-center justify-center text-[15px] font-bold text-[#c8552d] leading-none">P</div></TaskIcon>
        <TaskIcon><QLogo size={24} /></TaskIcon>
        <TaskIcon>
          <S size={24}><circle cx="12" cy="12" r="10.500" fill="#2c97d6" /><path d="M5 12l13-5-2 11-4-3-2 2-1-4z" fill="#fff" /></S>
        </TaskIcon>
        <TaskIcon><S size={24}><rect x="6" y="2" width="16" height="14" fill="#555" /><circle cx="9" cy="16" r="6" fill="#39a7c9" /><path d="M6 16h6M9 13v6" stroke="#fff" strokeWidth="1.5" /><path d="M13 20l3 3" stroke="#39a7c9" strokeWidth="2" /></S></TaskIcon>
        <TaskIcon><S size={26}><path d="M2 5h8l2 2h10v15H2z" fill="#f2c14e" /><rect x="2" y="14" width="20" height="8" fill="#3c8dc5" /></S></TaskIcon>
        <TaskIcon active><div className="w-[22px] h-[20px] bg-[#e9edf0] flex justify-center"><div className="w-[14px] h-full bg-[#1b7fd0]" /></div></TaskIcon>
      </div>
      <ChevronUp size={18} strokeWidth={2.5} className="ml-[62px] shrink-0" color="#ddd" />
      <S size={20} className="ml-[12px]"><path d="M4 16a4 4 0 0 1 2-8 6 6 0 0 1 11 1 4 4 0 0 1 0 8H5z" fill="#c9c9c9" /><rect x="11" y="12" width="9" height="8" rx="2" fill="#2478c4" /></S>
      <Mic size={18} className="ml-[10px] shrink-0" color="#5fa6a4" />
      <div className="ml-[16px] text-[11px] leading-[15px] text-center text-[#ddd] tracking-[0.2px]">ENG<br />UK</div>
      <Globe size={17} className="ml-[15px] shrink-0" color="#ddd" />
      <Volume2 size={17} className="ml-[7px] shrink-0" color="#ddd" />
      <div className="ml-[6px] w-[19px] h-[10px] shrink-0 rounded-[3px] border border-[#ddd] flex items-center p-px"><div className="w-[11px] h-full bg-[#e0a92a]" /></div>
      <div className="ml-[14px] w-[58px] text-[11px] leading-[15px] text-right text-[#ddd] whitespace-nowrap flex flex-col items-end">
        <span>6:12 PM</span>
        <span>29/01/2026</span>
      </div>
      <S size={17} className="ml-[7px]"><path d="M12 3a6 6 0 0 0-6 6v5l-2 3h16l-2-3V9a6 6 0 0 0-6-6zM10 20h4" fill="none" stroke="#ddd" strokeWidth="1.4" /></S>
    </div>
  );
}

export default function App() {
  return (
    <div className="w-[1280px] h-[720px] flex flex-col overflow-hidden bg-[#f1f1ed]">
      <div className="flex items-center h-[25px] pl-[3px] shrink-0">
        <QLogo />
        <span className={`ml-[3px] text-[15px] text-[#333] ${sans}`}>*Untitled Project — QGIS</span>
        <div className="ml-auto flex items-center text-[#333]">
          <Minus size={13} />
          <Copy size={11} strokeWidth={2} className="ml-[36px]" />
          <X size={15} className="ml-[36px] mr-[18px]" />
        </div>
      </div>
      <Menu />
      <ToolbarOne />
      <ToolbarTwo />
      <div className="relative flex flex-1 min-h-0 border-t border-[#d0d0cc]">
        <LayersPanel />
        <MapCanvas />
        <Toolbox />
        <TopologyPanel />
      </div>
      <StatusBar />
      <Taskbar />
    </div>
  );
}
